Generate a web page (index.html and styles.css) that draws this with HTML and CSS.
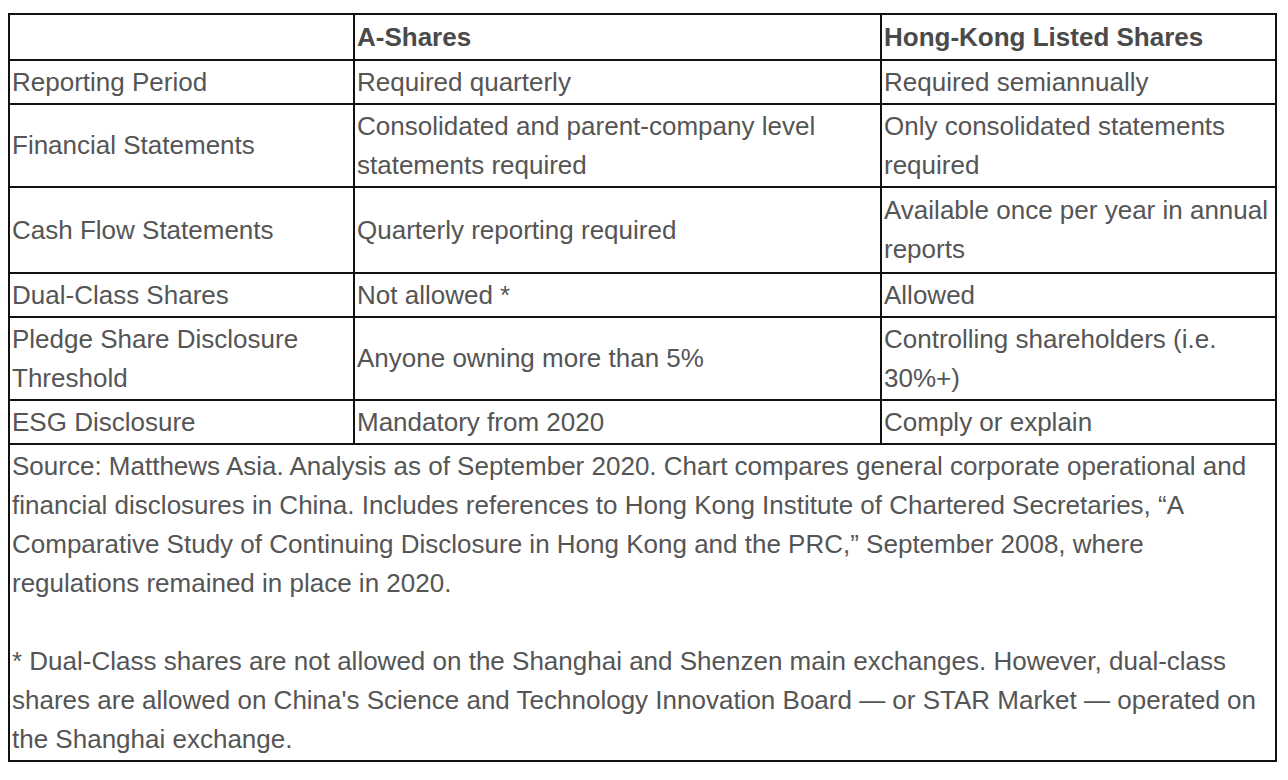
FILE: index.html
```html
<!DOCTYPE html>
<html lang="en">
<head>
<meta charset="utf-8">
<title>A-Shares vs Hong-Kong Listed Shares</title>
<link rel="stylesheet" href="styles.css">
</head>
<body>
<table class="cmp">
  <colgroup>
    <col class="c1">
    <col class="c2">
    <col class="c3">
  </colgroup>
  <thead>
    <tr class="head">
      <th></th>
      <th>A-Shares</th>
      <th>Hong-Kong Listed Shares</th>
    </tr>
  </thead>
  <tbody>
    <tr>
      <td>Reporting Period</td>
      <td>Required quarterly</td>
      <td>Required semiannually</td>
    </tr>
    <tr>
      <td>Financial Statements</td>
      <td>Consolidated and parent-company level statements required</td>
      <td>Only consolidated statements required</td>
    </tr>
    <tr class="tall">
      <td>Cash Flow Statements</td>
      <td>Quarterly reporting required</td>
      <td>Available once per year in annual reports</td>
    </tr>
    <tr>
      <td>Dual-Class Shares</td>
      <td>Not allowed *</td>
      <td>Allowed</td>
    </tr>
    <tr>
      <td>Pledge Share Disclosure Threshold</td>
      <td>Anyone owning more than 5%</td>
      <td>Controlling shareholders (i.e. 30%+)</td>
    </tr>
    <tr>
      <td>ESG Disclosure</td>
      <td>Mandatory from 2020</td>
      <td>Comply or explain</td>
    </tr>
    <tr>
      <td class="note" colspan="3">Source: Matthews Asia. Analysis as of September 2020. Chart compares general corporate operational and financial disclosures in China. Includes references to Hong Kong Institute of Chartered Secretaries, “A Comparative Study of Continuing Disclosure in Hong Kong and the PRC,” September 2008, where regulations remained in place in 2020.<br><br>* Dual-Class shares are not allowed on the Shanghai and Shenzen main exchanges. However, dual-class shares are allowed on China's Science and Technology Innovation Board — or STAR Market — operated on the Shanghai exchange.</td>
    </tr>
  </tbody>
</table>
</body>
</html>
```

FILE: styles.css
```css
html, body {
  background: #ffffff;
}

body {
  margin: 13px 8px 0 8px;
  font-family: "Liberation Sans", Arial, Helvetica, sans-serif;
  font-size: 26px;
  line-height: 39px;
  color: #555555;
}

.cmp {
  width: 1269px;
  table-layout: fixed;
  border-collapse: separate;
  border-spacing: 0;
  border-top: 2px solid #111111;
  border-left: 2px solid #111111;
}

.c1 { width: 345px; }
.c2 { width: 527px; }
.c3 { width: 395px; }

.cmp th,
.cmp td {
  border-right: 2px solid #111111;
  border-bottom: 2px solid #111111;
  padding: 1.5px 1px 1.5px 2px;
  text-align: left;
  vertical-align: middle;
  font-weight: normal;
}

.head th {
  height: 41px;
  font-weight: bold;
  color: #4a4a4a;
}

.tall td {
  height: 81px;
}

.note {
  padding-top: 3px;
  padding-bottom: 4px;
}
```
